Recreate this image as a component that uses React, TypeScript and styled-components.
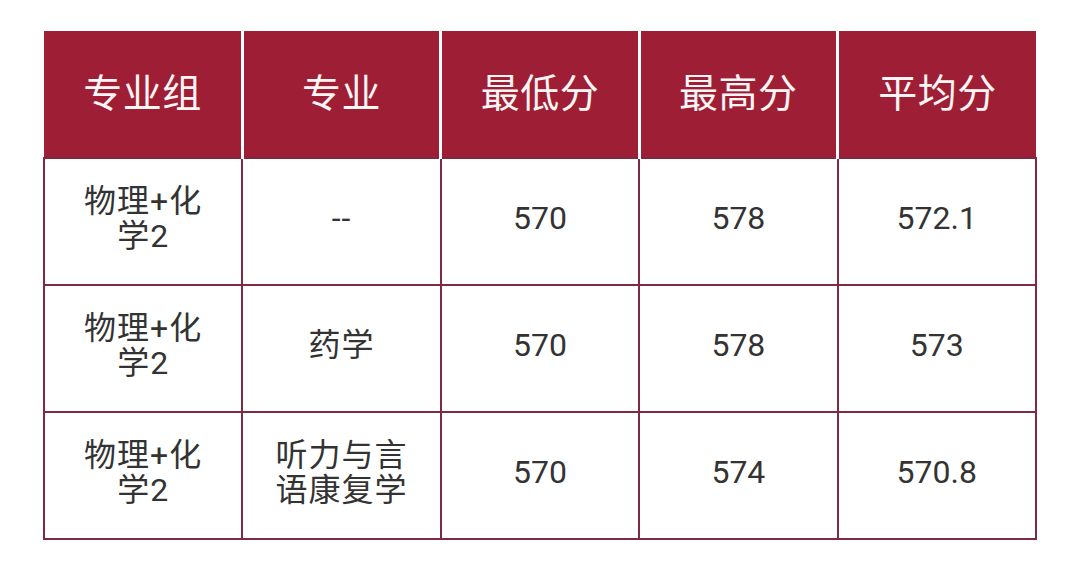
import React from "react";
import styled, { createGlobalStyle } from "styled-components";

const Global = createGlobalStyle`
  html, body { margin: 0; padding: 0; background: #ffffff; }
  body { font-family: Roboto, "Noto Sans CJK SC", sans-serif; }
`;

const Page = styled.div`
  width: 1080px;
  height: 562px;
  padding: 31px 0 0 43px;
  box-sizing: border-box;
`;

const Table = styled.table`
  border-collapse: collapse;
  table-layout: fixed;
  width: 994px;
`;

const HeadRow = styled.tr`
  height: 127px;
`;

const BodyRow = styled.tr`
  height: 127px;
`;

const HeadCell = styled.th`
  padding: 0 0 9px 0;
  background: #9e1f35;
  color: #fff5f5;
  font-family: "Noto Sans CJK SC", sans-serif;
  font-weight: 400;
  font-size: 39px;
  letter-spacing: 0.5px;
  text-align: center;
  vertical-align: middle;
  border-left: 3px solid #ffffff;
  border-bottom: 2px solid #7e2840;
  &:first-child { border-left: none; }
`;

const Cell = styled.td`
  padding: 0 0 6px 0;
  border: 2px solid #7e2a42;
  color: #333333;
  font-family: Roboto, "Noto Sans CJK SC", sans-serif;
  font-size: 32px;
  line-height: 35px;
  text-align: center;
  vertical-align: middle;
  word-break: break-all;
`;

const CellText = styled.div<{ $w?: number }>`
  margin: 0 auto;
  width: ${(p) => (p.$w ? `${p.$w}px` : "auto")};
  font-family: Roboto, "Noto Sans CJK SC", sans-serif;
  letter-spacing: 1px;
`;

const headers = ["专业组", "专业", "最低分", "最高分", "平均分"];
const rows = [
  { major: "--", min: "570", max: "578", avg: "572.1" },
  { major: "药学", min: "570", max: "578", avg: "573" },
  { major: "听力与言语康复学", min: "570", max: "574", avg: "570.8" },
];

export default function App() {
  return (
    <Page>
      <Global />
      <Table>
        <thead>
          <HeadRow>
            {headers.map((h) => (
              <HeadCell key={h}>{h}</HeadCell>
            ))}
          </HeadRow>
        </thead>
        <tbody>
          {rows.map((r, i) => (
            <BodyRow key={i}>
              <Cell>
                <CellText $w={130}>物理+化学2</CellText>
              </Cell>
              <Cell>
                {r.major.length > 4 ? (
                  <CellText $w={138}>{r.major}</CellText>
                ) : (
                  <CellText>{r.major}</CellText>
                )}
              </Cell>
              <Cell>{r.min}</Cell>
              <Cell>{r.max}</Cell>
              <Cell>{r.avg}</Cell>
            </BodyRow>
          ))}
        </tbody>
      </Table>
    </Page>
  );
}
